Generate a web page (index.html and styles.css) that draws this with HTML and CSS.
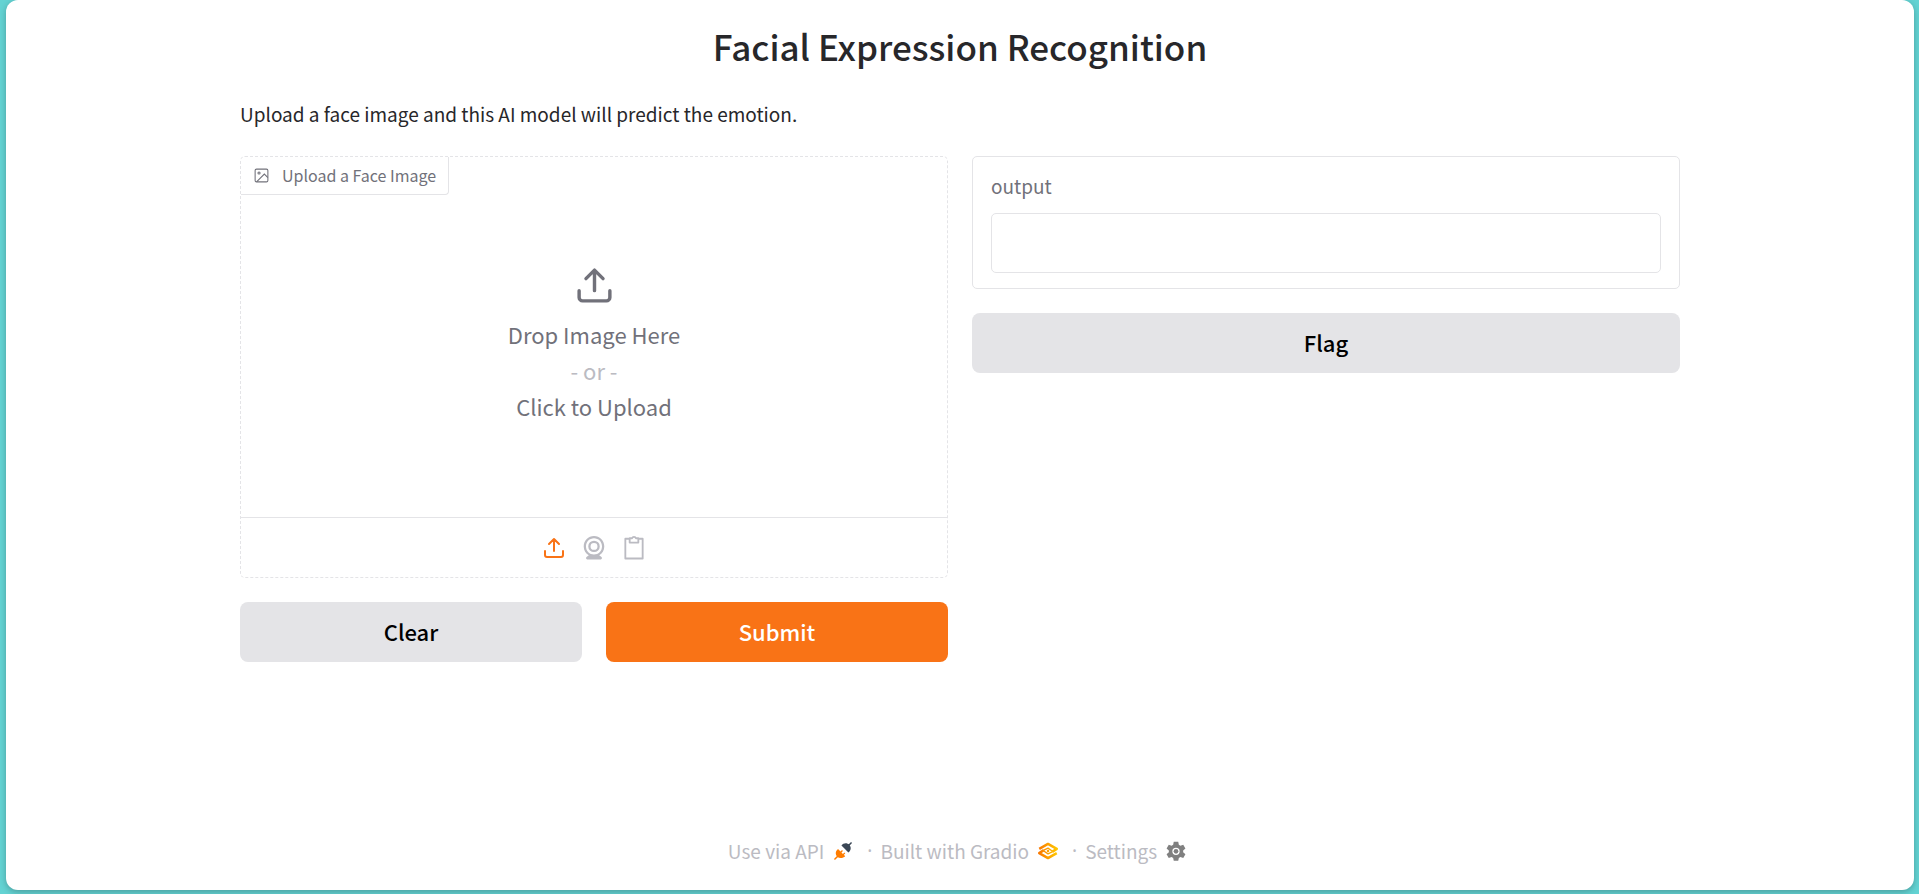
FILE: index.html
```html
<!DOCTYPE html>
<html lang="en">
<head>
<meta charset="utf-8">
<meta name="viewport" content="width=device-width, initial-scale=1">
<title>Facial Expression Recognition</title>
<link rel="stylesheet" href="styles.css">
</head>
<body>
<div class="app">
  <main class="content">
    <h1 class="title">Facial Expression Recognition</h1>
    <p class="description">Upload a face image and this AI model will predict the emotion.</p>
    <div class="columns">
      <section class="column">
        <div class="upload-panel">
          <div class="panel-label">
            <svg class="label-icon" viewBox="0 0 24 24" aria-hidden="true"><rect x="3" y="3" width="18" height="18" rx="2"/><circle cx="8.5" cy="8.5" r="1.5"/><path d="M21 15l-5-5L5 21"/></svg>
            <span>Upload a Face Image</span>
          </div>
          <button class="dropzone" type="button">
            <svg class="drop-icon" viewBox="0 0 24 24" aria-hidden="true"><path d="M21 15v4a2 2 0 0 1-2 2H5a2 2 0 0 1-2-2v-4M17 8l-5-5-5 5M12 3v12"/></svg>
            <span>Drop Image Here</span>
            <span class="or">- or -</span>
            <span>Click to Upload</span>
          </button>
          <div class="sources">
            <button class="source active" type="button" aria-label="Upload file">
              <svg viewBox="0 0 24 24" aria-hidden="true"><path d="M21 15v4a2 2 0 0 1-2 2H5a2 2 0 0 1-2-2v-4M17 8l-5-5-5 5M12 3v12" fill="none" stroke="currentColor" stroke-width="2" stroke-linecap="round" stroke-linejoin="round"/></svg>
            </button>
            <button class="source" type="button" aria-label="Capture from camera">
              <svg viewBox="0 0 24 24" aria-hidden="true"><path fill="currentColor" d="M12 1c-5.200 0-9.500 4.300-9.500 9.500 0 3.500 1.900 6.500 4.700 8.200l-2.100 1.500A1.300 1.300 0 0 0 5.700 22.500h12.600a1.300 1.300 0 0 0 .6-2.300l-2.100-1.500c2.800-1.700 4.700-4.700 4.700-8.200C21.500 5.300 17.200 1 12 1m0 16.900c-4.100 0-7.400-3.300-7.400-7.400S7.900 3.100 12 3.100s7.400 3.300 7.400 7.400-3.300 7.400-7.400 7.400"/><path fill="currentColor" d="M12 5.200a5.300 5.300 0 1 0 0 10.600 5.300 5.300 0 0 0 0-10.600m0 8.500a3.200 3.200 0 1 1 0-6.400 3.200 3.200 0 0 1 0 6.400"/></svg>
            </button>
            <button class="source" type="button" aria-label="Paste from clipboard">
              <svg viewBox="0 0 24 24" aria-hidden="true"><path d="M8 3.500H4v18.200h16V3.500H16M8 3h2.200a1.900 1.900 0 0 1 3.600 0H16v4H8z" fill="none" stroke="currentColor" stroke-width="1.700" stroke-linejoin="round"/></svg>
            </button>
          </div>
        </div>
        <div class="actions">
          <button class="btn" type="button">Clear</button>
          <button class="btn primary" type="button">Submit</button>
        </div>
      </section>
      <section class="column">
        <div class="output-card">
          <label class="output-label" for="output">output</label>
          <input class="output-field" id="output" type="text" readonly>
        </div>
        <button class="btn" type="button">Flag</button>
      </section>
    </div>
  </main>
  <footer class="footer">
    <a class="footer-link" href="#api">Use via API
      <svg viewBox="-1 -1 26 26" aria-hidden="true"><path d="M22.500 1.500L18.500 5.500" stroke-width="2" stroke-linecap="round" stroke="#3b4756"/><path d="M1.500 22.500L5.500 18.500" stroke-width="2" stroke-linecap="round" stroke="#ff7c00"/><path d="M10 5C12.500 1.500 17 1 20.200 4c2.800 3 2.300 7.500-1.200 10z" fill="#3b4756"/><path d="M5.500 9.500l3.300 3.200 1.900-1.900 1.200 1.200-1.900 1.900 1.900 1.900 1.900-1.900 1.200 1.200-1.900 1.900 1.800 1.800C12 21.500 7.500 22 4.500 19.500 1.800 16.500 2 12.500 5.500 9.500z" fill="#ff7c00"/></svg>
    </a>
    <span class="dot">·</span>
    <a class="footer-link" href="#gradio">Built with Gradio
      <svg viewBox="0 0 24 24" fill="none" stroke-linejoin="round" aria-hidden="true"><defs><linearGradient id="amber" gradientUnits="userSpaceOnUse" x1="1" y1="0" x2="23" y2="0"><stop stop-color="#f97700"/><stop offset="1" stop-color="#ffc800"/></linearGradient></defs><path d="M1.500 9.500L12 3.500l10.500 6L17 13M22.500 14.500L12 20.500l-10.500-6L7 11" stroke="url(#amber)" stroke-width="3"/><path d="M7 11l5-2.500 5 3.500M7 12l5 3.500 5-2.500" stroke="url(#amber)" stroke-width="1.600"/><circle cx="12" cy="12" r="1.500" fill="#ffa200"/></svg>
    </a>
    <span class="dot">·</span>
    <button class="footer-link" type="button">Settings
      <svg viewBox="0 0 24 24" aria-hidden="true"><path fill="#808080" fill-rule="evenodd" d="M9.300 1h5.400l.7 3.500 1.900 1.100 3.400-1.200 2.600 4.600-2.700 2.300v2.200l2.700 2.300-2.600 4.600-3.400-1.200-1.900 1.100-.7 3.500H9.300l-.7-3.500-1.900-1.100-3.400 1.200-2.600-4.600 2.700-2.300v-2.200L.700 9l2.600-4.600 3.400 1.200 1.900-1.100zM12 8a4.400 4.400 0 1 0 0 8.800A4.400 4.400 0 0 0 12 8z"/><circle cx="12" cy="12.400" r="2.800" fill="#808080"/></svg>
    </button>
  </footer>
</div>
</body>
</html>
```
FILE: styles.css
```css
* {
  box-sizing: border-box;
}

body {
  margin: 0;
  min-height: 100vh;
  display: flex;
  padding: 0 5px 4px 6px;
  background: #63d3d3;
  color: #27272a;
  font-family: "Noto Sans CJK SC", "Noto Sans", sans-serif;
  font-size: 19px;
  line-height: 30px;
}

button,
input {
  font: inherit;
  color: inherit;
}

button {
  padding: 0;
  border: 0;
  background: none;
  cursor: pointer;
}

.app {
  flex: 1;
  display: flex;
  flex-direction: column;
  justify-content: space-between;
  padding: 18px 40px 24px;
  background: #fff;
  border-radius: 12px;
  box-shadow: 0 2px 6px rgba(0, 0, 0, 0.25);
}

.content {
  width: 100%;
  max-width: 1440px;
  margin: 0 auto;
}

.title {
  margin: 0 0 25px;
  font-size: 35px;
  font-weight: 500;
  line-height: 56px;
  text-align: center;
}

.description {
  margin: 0 0 27px;
}

.columns {
  display: grid;
  grid-template-columns: 1fr 1fr;
  gap: 24px;
  align-items: start;
}

.column {
  display: flex;
  flex-direction: column;
  gap: 24px;
}

.upload-panel {
  position: relative;
  display: flex;
  flex-direction: column;
  border: 1px dashed #e4e4e7;
  border-radius: 5px;
}

.panel-label {
  position: absolute;
  top: 0;
  left: 0;
  display: flex;
  align-items: center;
  gap: 12px;
  padding: 3px 12px 4px;
  border: solid #e4e4e7;
  border-width: 0 1px 1px 0;
  border-radius: 4px 0;
  color: #71717a;
  font-size: 16px;
}

.label-icon {
  width: 17px;
  height: 17px;
  fill: none;
  stroke: currentColor;
  stroke-width: 1.5;
}

.dropzone {
  display: flex;
  flex-direction: column;
  align-items: center;
  justify-content: center;
  height: 360px;
  padding-top: 14px;
  color: #71717a;
  font-size: 22px;
  line-height: 36px;
}

.drop-icon {
  width: 41px;
  height: 41px;
  margin-bottom: 10px;
  fill: none;
  stroke: currentColor;
  stroke-width: 2;
  stroke-linecap: round;
  stroke-linejoin: round;
}

.or {
  color: #bbbbc2;
}

.sources {
  display: flex;
  align-items: center;
  justify-content: center;
  gap: 14px;
  height: 60px;
  border-top: 1px solid #e4e4e7;
}

.source {
  display: flex;
  color: #bbbbc2;
}

.source svg {
  width: 26px;
  height: 26px;
}

.source.active {
  color: #f97316;
}

.source.active svg {
  padding: 1px;
}

.actions {
  display: grid;
  grid-template-columns: 1fr 1fr;
  gap: 24px;
}

.btn {
  height: 60px;
  padding-bottom: 3px;
  border-radius: 8px;
  background: #e4e4e7;
  color: #000;
  font-size: 22px;
  font-weight: 500;
}

.btn.primary {
  background: #f97316;
  color: #fff;
}

.output-card {
  display: flex;
  flex-direction: column;
  gap: 12px;
  padding: 14px 18px 15px;
  border: 1px solid #e4e4e7;
  border-radius: 5px;
}

.output-label {
  color: #71717a;
}

.output-field {
  width: 100%;
  height: 60px;
  padding: 12px;
  border: 1px solid #e4e4e7;
  border-radius: 5px;
  background: #fff;
}

.footer {
  display: flex;
  flex-wrap: wrap;
  justify-content: center;
  gap: 8px;
  color: #bbbbc2;
}

.footer-link {
  display: flex;
  align-items: center;
  color: #bbbbc2;
  text-decoration: none;
}

.footer-link svg {
  width: 20px;
  height: 20px;
  margin: 0 6px 0 9px;
}

.dot {
  font-family: "Noto Sans", sans-serif;
}
```
